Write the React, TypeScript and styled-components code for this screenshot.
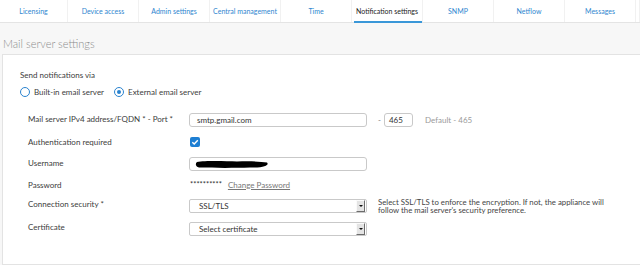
import React from "react";
import styled, { createGlobalStyle, css } from "styled-components";

const GlobalStyle = createGlobalStyle`
  html, body { margin: 0; padding: 0; }
  body {
    background: #f7f7f7;
    font-family: Lato, "Noto Sans", "Liberation Sans", sans-serif;
    color: #3c3c3c;
    width: 640px;
    height: 265px;
    overflow: hidden;
  }
`;

const Page = styled.div`
  width: 640px;
  height: 265px;
  display: flex;
  flex-direction: column;
`;

const TabBar = styled.nav`
  display: grid;
  grid-template-columns: 68px repeat(8, 71px) 4px;
  height: 23px;
  background: #fff;
  border-bottom: 1px solid #e4e4e4;
  box-sizing: border-box;
`;

const Tab = styled.div<{ $active?: boolean }>`
  position: relative;
  display: flex;
  align-items: center;
  justify-content: center;
  font-size: 7px;
  color: #2f86cf;
  border-right: 1px solid #f1f1f1;
  white-space: nowrap;
  ${(p) =>
    p.$active &&
    css`
      color: #1c1c1c;
      &::after {
        content: "";
        position: absolute;
        left: 2px;
        right: 0;
        bottom: -1px;
        height: 2px;
        background: #3a97d8;
      }
    `}
`;

const Heading = styled.h2`
  margin: 0;
  padding: 13px 0 0 3px;
  height: 31px;
  box-sizing: border-box;
  font-size: 11px;
  font-weight: 300;
  color: #8c8c8c;
  line-height: 16px;
`;

const Panel = styled.section`
  margin-left: 2px;
  flex: 1;
  background: #fff;
  border: 1px solid #e3e3e3;
  border-right: none;
  padding: 14px 0 0 17px;
  box-sizing: border-box;
  font-size: 8px;
`;

const Caption = styled.div`
  height: 12px;
  line-height: 12px;
  color: #3c3c3c;
`;

const RadioRow = styled.div`
  display: flex;
  align-items: center;
  height: 14px;
  margin-top: 4px;
  gap: 10px;
`;

const RadioLabel = styled.label`
  display: flex;
  align-items: center;
  gap: 4px;
  color: #3c3c3c;
`;

const RadioCircle = styled.span<{ $checked?: boolean }>`
  width: 10px;
  height: 10px;
  border-radius: 50%;
  border: 1.5px solid #2a83cf;
  box-sizing: border-box;
  display: flex;
  align-items: center;
  justify-content: center;
  &::after {
    content: "";
    width: 4px;
    height: 4px;
    border-radius: 50%;
    background: ${(p) => (p.$checked ? "#2a83cf" : "transparent")};
  }
`;

const Fields = styled.div`
  margin-top: 10px;
  padding-left: 8px;
`;

const FieldRow = styled.div<{ $h: number }>`
  display: grid;
  grid-template-columns: 161px auto;
  align-items: center;
  height: ${(p) => p.$h}px;
`;

const Label = styled.div<{ $lift?: number }>`
  color: #3c3c3c;
  position: relative;
  top: ${(p) => -(p.$lift || 0)}px;
  white-space: nowrap;
`;

const Control = styled.div`
  display: flex;
  align-items: center;
`;

const TextBox = styled.div<{ $w: number }>`
  width: ${(p) => p.$w}px;
  height: 14px;
  border: 1px solid #c9c9c9;
  border-radius: 3px;
  box-sizing: border-box;
  display: flex;
  align-items: center;
  padding-left: 7px;
  color: #333;
  background: #fff;
  position: relative;
`;

const PortBox = styled(TextBox)`
  padding-left: 4px;
`;

const Dash = styled.span`
  margin: 0 3px 0 11px;
  color: #777;
`;

const Hint = styled.span`
  margin-left: 12px;
  color: #9a9a9a;
`;

const Check = styled.span`
  width: 10px;
  height: 10px;
  border-radius: 2px;
  background: #1e7fd3;
  display: flex;
  align-items: center;
  justify-content: center;
  margin-left: 1px;
`;

const Stars = styled.span`
  color: #333;
  font-size: 7.5px;
  margin-left: 1px;
`;

const LinkText = styled.a`
  margin-left: 6px;
  color: #777;
  text-decoration: underline;
`;

const Select = styled.div`
  width: 178px;
  height: 14px;
  border: 1px solid #c9c9c9;
  border-radius: 2px;
  box-sizing: border-box;
  display: flex;
  align-items: center;
  justify-content: space-between;
  padding: 0 1px 0 9px;
  color: #333;
`;

const ArrowBox = styled.span`
  width: 7px;
  height: 10px;
  background: #e4e4e4;
  border-top: 1px solid #fafafa;
  border-left: 1px solid #fafafa;
  border-right: 1px solid #6c6c6c;
  border-bottom: 1px solid #6c6c6c;
  box-sizing: content-box;
  display: flex;
  align-items: center;
  justify-content: center;
  &::after {
    content: "";
    border-left: 2px solid transparent;
    border-right: 2px solid transparent;
    border-top: 2px solid #111;
  }
`;

const Help = styled.div`
  margin-left: 11px;
  color: #444;
  line-height: 8px;
  font-size: 7.8px;
  width: 240px;
`;

const Redaction = styled.svg`
  position: absolute;
  left: 5px;
  top: 2px;
`;

const tabs = [
  "Licensing",
  "Device access",
  "Admin settings",
  "Central management",
  "Time",
  "Notification settings",
  "SNMP",
  "Netflow",
  "Messages",
];

export default function App() {
  return (
    <>
      <GlobalStyle />
      <Page>
        <TabBar>
          {tabs.map((t) => (
            <Tab key={t} $active={t === "Notification settings"}>
              {t}
            </Tab>
          ))}
          <Tab />
        </TabBar>
        <Heading>Mail server settings</Heading>
        <Panel>
          <Caption>Send notifications via</Caption>
          <RadioRow>
            <RadioLabel>
              <RadioCircle />
              Built-in email server
            </RadioLabel>
            <RadioLabel>
              <RadioCircle $checked />
              External email server
            </RadioLabel>
          </RadioRow>
          <Fields>
            <FieldRow $h={22}>
              <Label $lift={1}>Mail server IPv4 address/FQDN * - Port *</Label>
              <Control>
                <TextBox $w={178}>smtp.gmail.com</TextBox>
                <Dash>-</Dash>
                <PortBox $w={29}>465</PortBox>
                <Hint>Default - 465</Hint>
              </Control>
            </FieldRow>
            <FieldRow $h={22}>
              <Label>Authentication required</Label>
              <Control>
                <Check>
                  <svg width="8" height="8" viewBox="0 0 8 8">
                    <path d="M1.3 4.2 L3.2 6 L6.8 2.2" fill="none" stroke="#fff" strokeWidth="1.4" />
                  </svg>
                </Check>
              </Control>
            </FieldRow>
            <FieldRow $h={22}>
              <Label $lift={1}>Username</Label>
              <Control>
                <TextBox $w={178}>
                  <Redaction width="74" height="9" viewBox="0 0 74 9">
                    <path
                      d="M2 2 C10 0.5, 30 1, 42 1.5 C55 1, 66 1.5, 72 2.5 C74.5 5, 70 8, 55 7.5 C40 8, 20 8, 4 7.5 C0.5 6.5, 0 3.5, 2 2 Z"
                      fill="#000"
                    />
                  </Redaction>
                </TextBox>
              </Control>
            </FieldRow>
            <FieldRow $h={19}>
              <Label>Password</Label>
              <Control>
                <Stars>**********</Stars>
                <LinkText>Change Password</LinkText>
              </Control>
            </FieldRow>
            <FieldRow $h={24}>
              <Label $lift={2}>Connection security *</Label>
              <Control>
                <Select>
                  SSL/TLS
                  <ArrowBox />
                </Select>
                <Help>
                  Select SSL/TLS to enforce the encryption. If not, the appliance will follow the mail
                  server's security preference.
                </Help>
              </Control>
            </FieldRow>
            <FieldRow $h={22}>
              <Label $lift={2}>Certificate</Label>
              <Control>
                <Select>
                  Select certificate
                  <ArrowBox />
                </Select>
              </Control>
            </FieldRow>
          </Fields>
        </Panel>
      </Page>
    </>
  );
}
